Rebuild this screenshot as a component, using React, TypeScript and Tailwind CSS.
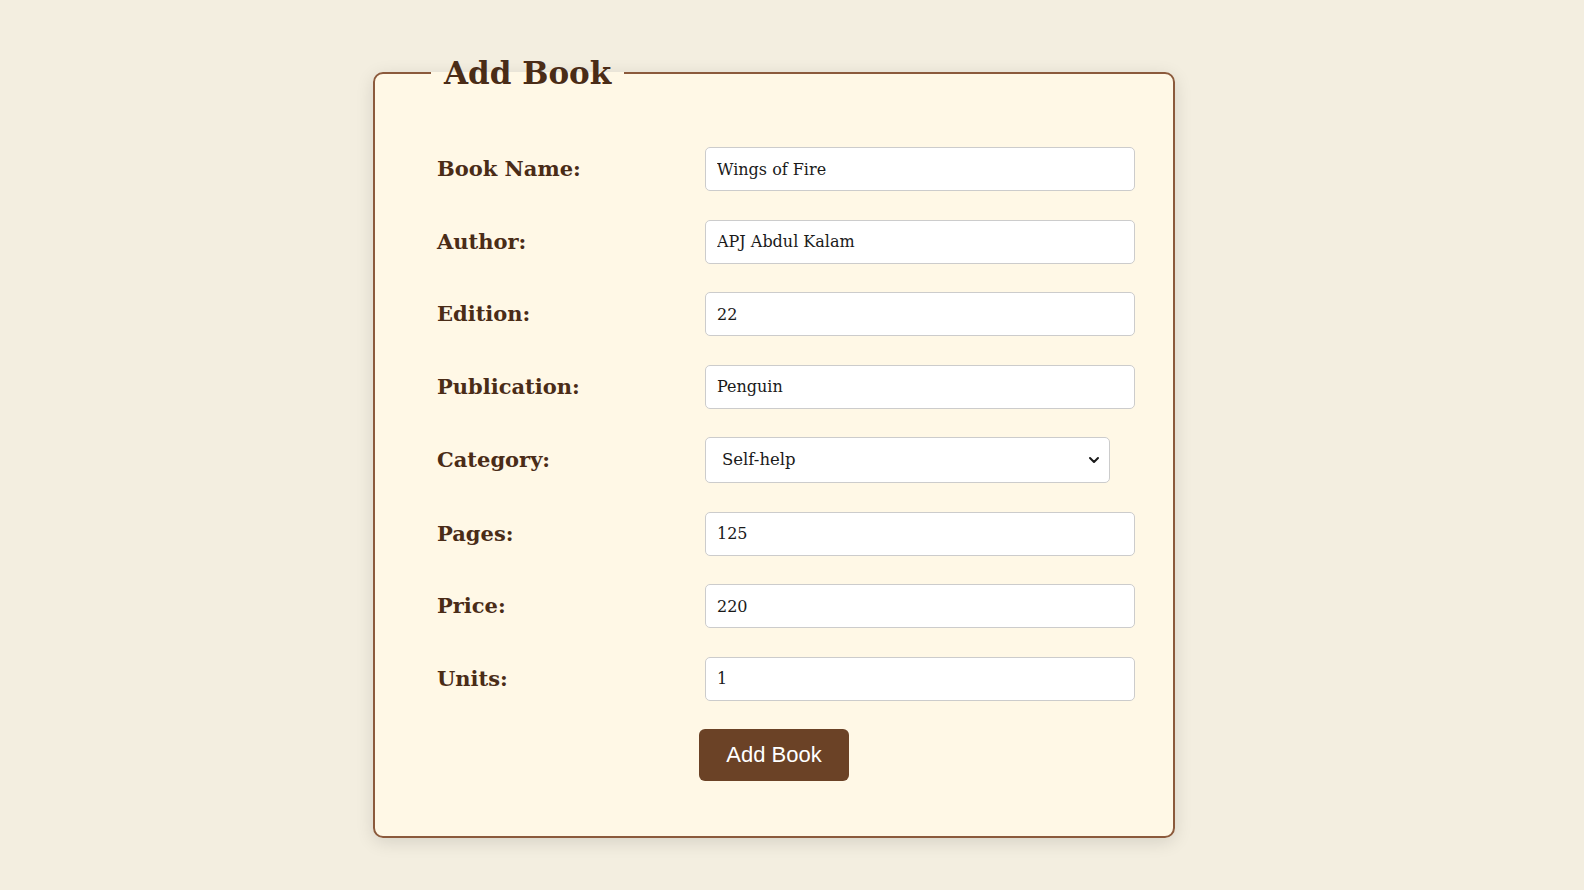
import { useState } from "react"

const fields = [
  { label: "Book Name:", value: "Wings of Fire" },
  { label: "Author:", value: "APJ Abdul Kalam" },
  { label: "Edition:", value: "22" },
  { label: "Publication:", value: "Penguin" },
  { label: "Category:", value: "Self-help", select: true },
  { label: "Pages:", value: "125" },
  { label: "Price:", value: "220" },
  { label: "Units:", value: "1" },
]

const categories = ["Self-help", "Fiction", "Biography", "Science", "History"]

export default function App() {
  const [values, setValues] = useState(fields.map((f) => f.value))

  return (
    <div className="min-h-screen bg-[#f3eee0] pt-[53px] pl-[373px] font-['DejaVu_Serif',serif]">
      <form onSubmit={(e) => e.preventDefault()}>
        <fieldset className="w-[802px] rounded-[10px] border-2 border-[#8b5a3c] bg-[#fff8e6] shadow-[0_4px_18px_rgba(0,0,0,0.12)]">
          <legend className="ml-[56px] px-[13px] text-[31px] leading-[40px] font-bold text-[#4a2c17]">
            Add Book
          </legend>

          <div className="flex flex-col gap-[28.5px] pl-[62px] pr-[38px] pt-[54px]">
            {fields.map((item, key) => (
              <div key={key} className="flex items-center">
                <label className="w-[268px] text-[21px] font-bold text-[#4a2c17]">
                  {item.label}
                </label>
                {item.select ? (
                  <div className="relative w-[405px]">
                    <select
                      value={values[key]}
                      onChange={(e) => {
                        const v = [...values]
                        v[key] = e.target.value
                        setValues(v)
                      }}
                      className="h-[46px] w-full appearance-none rounded-[5px] border border-[#cccccc] bg-white pl-[16px] text-[16.5px] text-[#1a1a1a] outline-none"
                    >
                      {categories.map((c) => (
                        <option key={c}>{c}</option>
                      ))}
                    </select>
                    <svg
                      className="pointer-events-none absolute right-[10px] top-[17px] h-[12px] w-[12px]"
                      viewBox="0 0 12 12"
                      fill="none"
                      stroke="#1a1a1a"
                      strokeWidth="2"
                      strokeLinecap="round"
                      strokeLinejoin="round"
                    >
                      <path d="M2 4l4 4 4-4" />
                    </svg>
                  </div>
                ) : (
                  <input
                    value={values[key]}
                    onChange={(e) => {
                      const v = [...values]
                      v[key] = e.target.value
                      setValues(v)
                    }}
                    className="h-[44px] w-[430px] rounded-[5px] border border-[#cccccc] bg-white px-[11px] text-[16px] text-[#1a1a1a] outline-none"
                  />
                )}
              </div>
            ))}
          </div>

          <div className="flex justify-center px-[62px] pt-[28px] pb-[55px]">
            <button
              type="submit"
              className="h-[52px] w-[150px] rounded-[6px] bg-[#6b4226] font-['Liberation_Sans',sans-serif] text-[22px] text-white"
            >
              Add Book
            </button>
          </div>
        </fieldset>
      </form>
    </div>
  )
}
